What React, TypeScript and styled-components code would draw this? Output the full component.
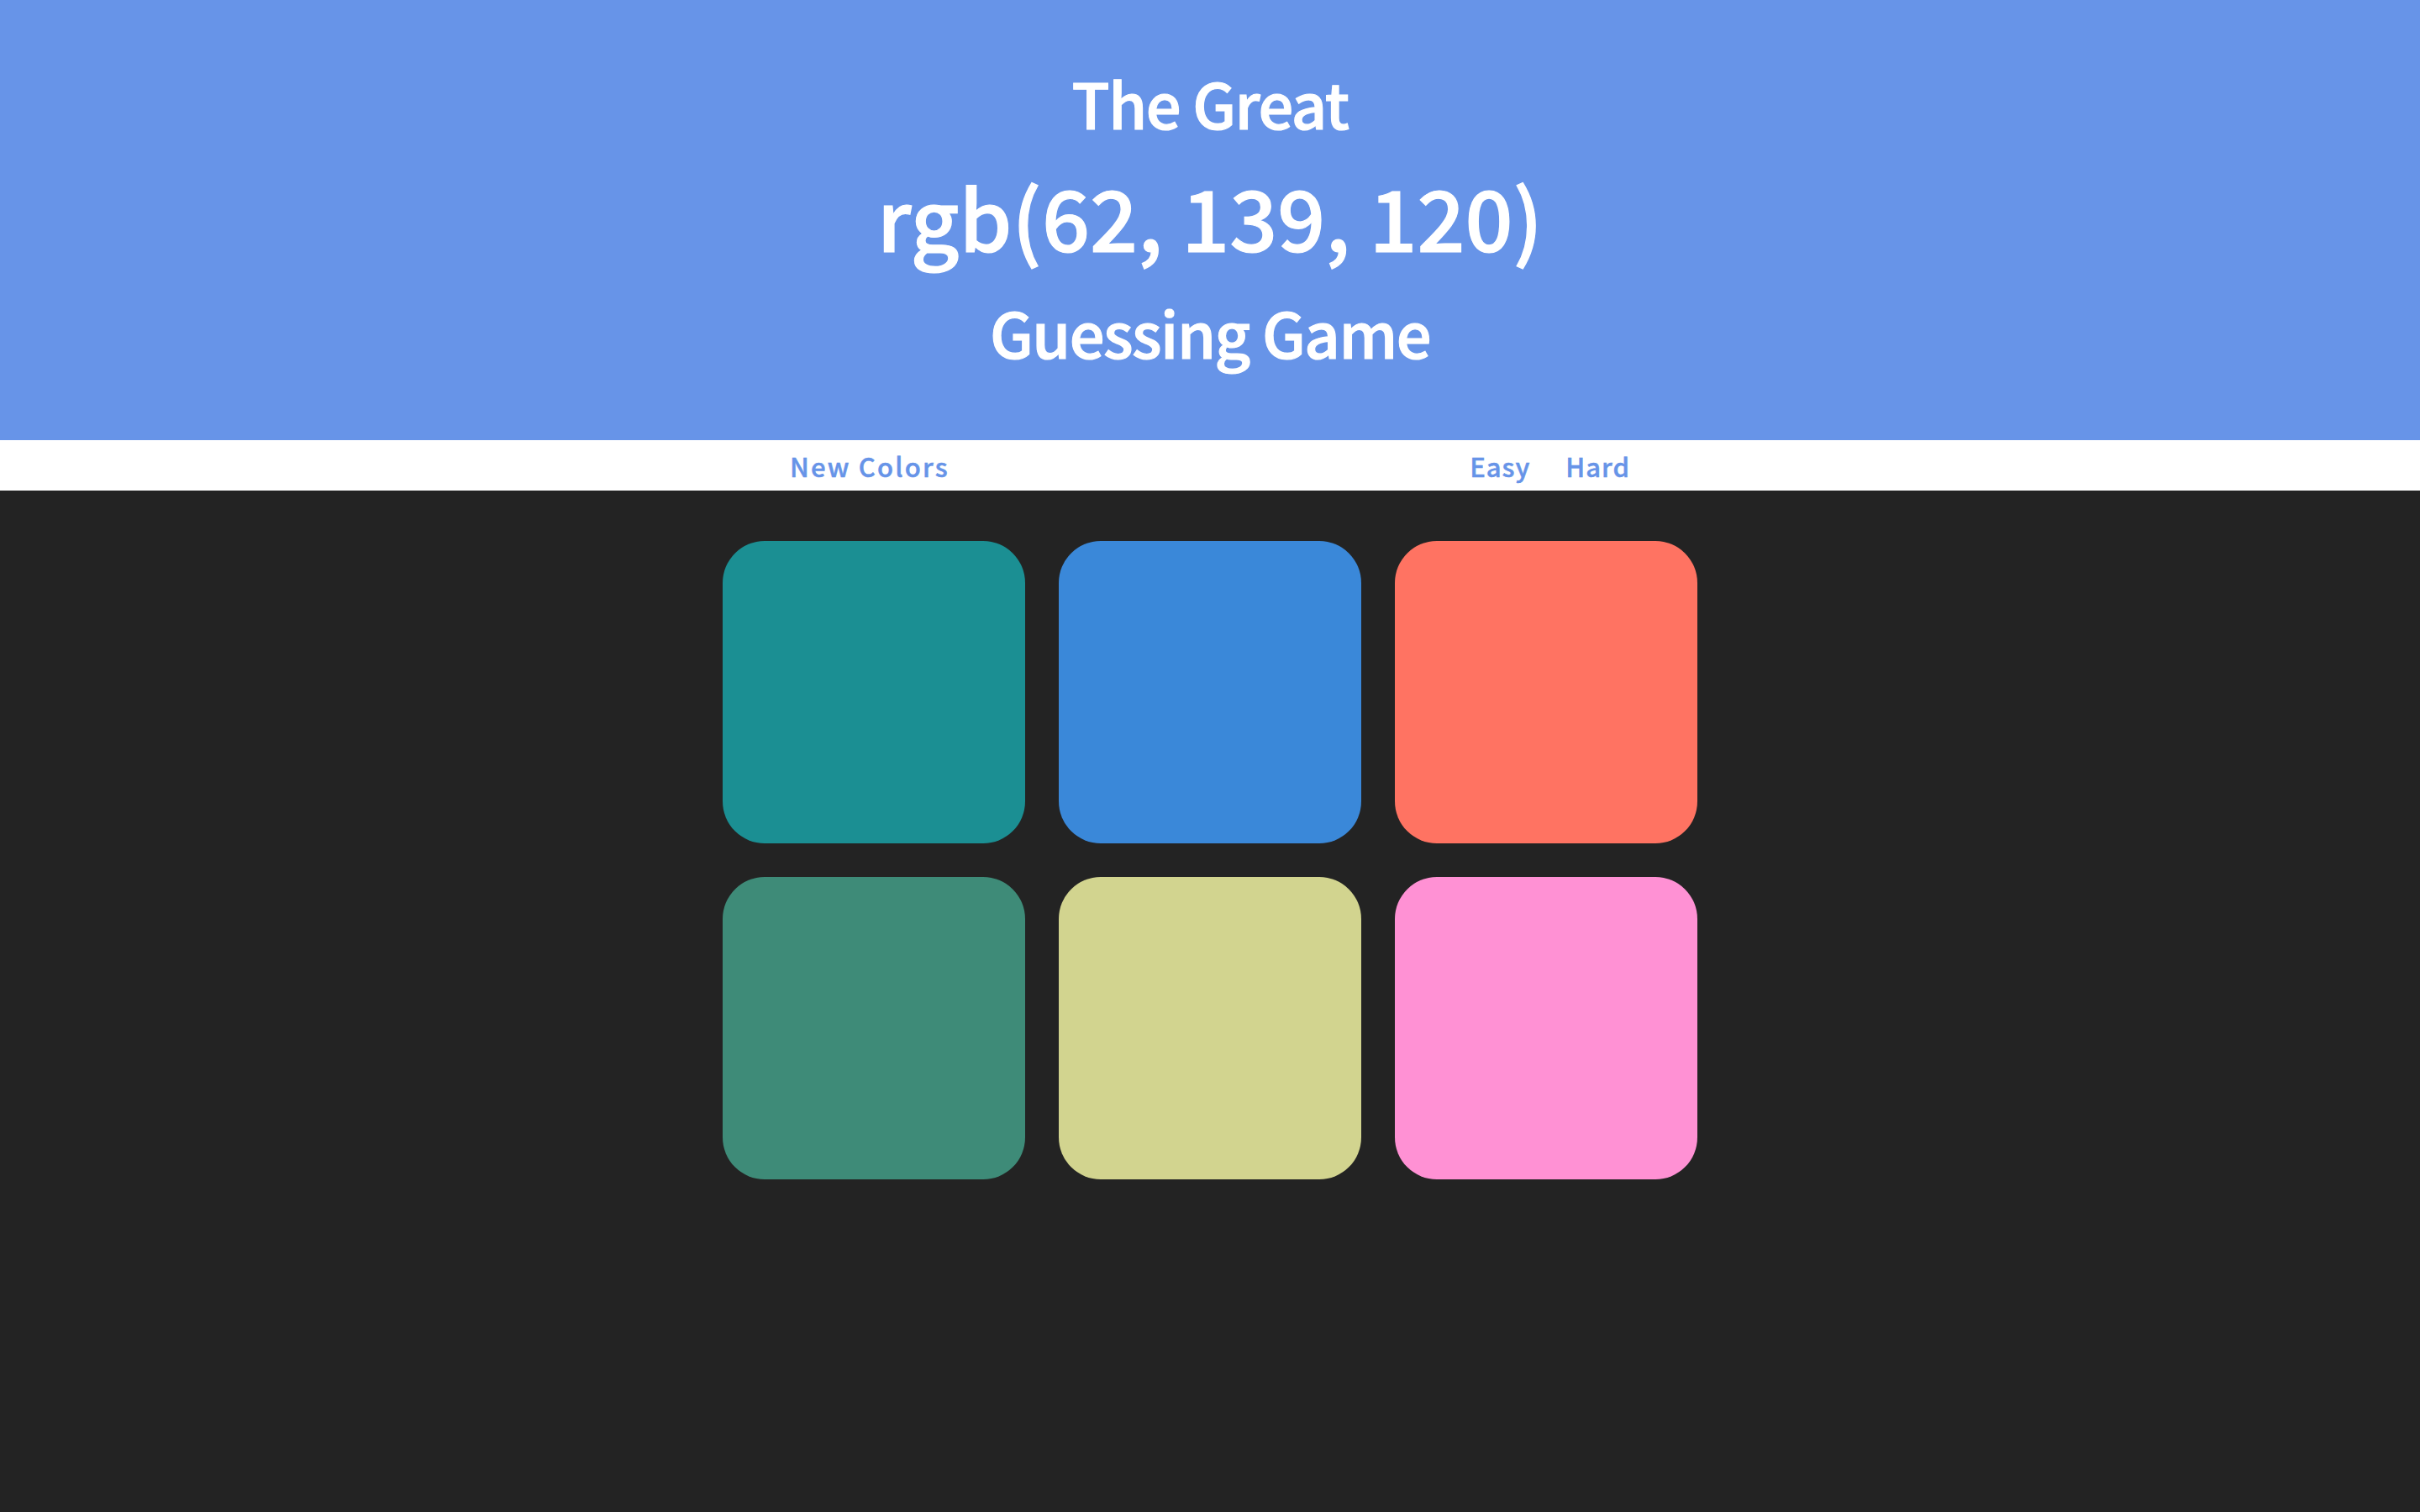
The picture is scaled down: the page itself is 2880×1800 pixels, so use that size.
import React, { FC } from 'react';
import styled, { createGlobalStyle } from 'styled-components';

const GlobalStyle = createGlobalStyle`
  html, body {
    margin: 0;
    padding: 0;
    background: #232323;
    font-family: "Noto Sans CJK KR", "Noto Sans", sans-serif;
  }
`;

const squares = ['#1b8f93', '#3a88d9', '#ff7362', '#3e8b78', '#d2d48f', '#ff91d4'];

const Header = styled.h1`
  margin: 0;
  height: 524px;
  box-sizing: border-box;
  padding-top: 62px;
  background: #6794e8;
  color: #ffffff;
  text-align: center;
  font-weight: 500;
  -webkit-text-stroke: 1.2px #ffffff;
`;

const Line = styled.span<{ $size: number; $height: number; $spacing?: number }>`
  display: block;
  font-size: ${p => p.$size}px;
  line-height: ${p => p.$height}px;
  letter-spacing: ${p => p.$spacing ?? 0}px;
`;

const Stripe = styled.div`
  height: 60px;
  background: #ffffff;
  display: flex;
  justify-content: center;
`;

const StripeInner = styled.div`
  width: 1000px;
  display: flex;
  align-items: center;
  justify-content: space-between;
`;

const Modes = styled.div`
  display: flex;
  gap: 42px;
`;

const NavButton = styled.button<{ $spacing?: number }>`
  border: none;
  background: none;
  padding: 0;
  font-family: inherit;
  font-size: 31px;
  font-weight: 500;
  letter-spacing: ${p => p.$spacing ?? 1}px;
  color: #6794e8;
  -webkit-text-stroke: 0.5px #6794e8;
  cursor: pointer;
`;

const Board = styled.div`
  display: grid;
  grid-template-columns: repeat(3, 360px);
  gap: 40px;
  justify-content: center;
  padding-top: 60px;
`;

const Square = styled.div<{ $color: string }>`
  width: 360px;
  height: 360px;
  border-radius: 50px;
  background: ${p => p.$color};
`;

const App: FC = () => {
  return (
    <>
      <GlobalStyle />
      <Header>
        <Line $size={74} $height={120} $spacing={-1.5}>The Great</Line>
        <Line $size={100} $height={150}>rgb(62, 139, 120)</Line>
        <Line $size={74} $height={126} $spacing={-1.5}>Guessing Game</Line>
      </Header>
      <Stripe>
        <StripeInner>
          <NavButton $spacing={2.2}>New Colors</NavButton>
          <Modes>
            <NavButton>Easy</NavButton>
            <NavButton>Hard</NavButton>
          </Modes>
        </StripeInner>
      </Stripe>
      <Board>
        {squares.map((c, i) => (
          <Square key={i} $color={c} />
        ))}
      </Board>
    </>
  );
};

export default App;
